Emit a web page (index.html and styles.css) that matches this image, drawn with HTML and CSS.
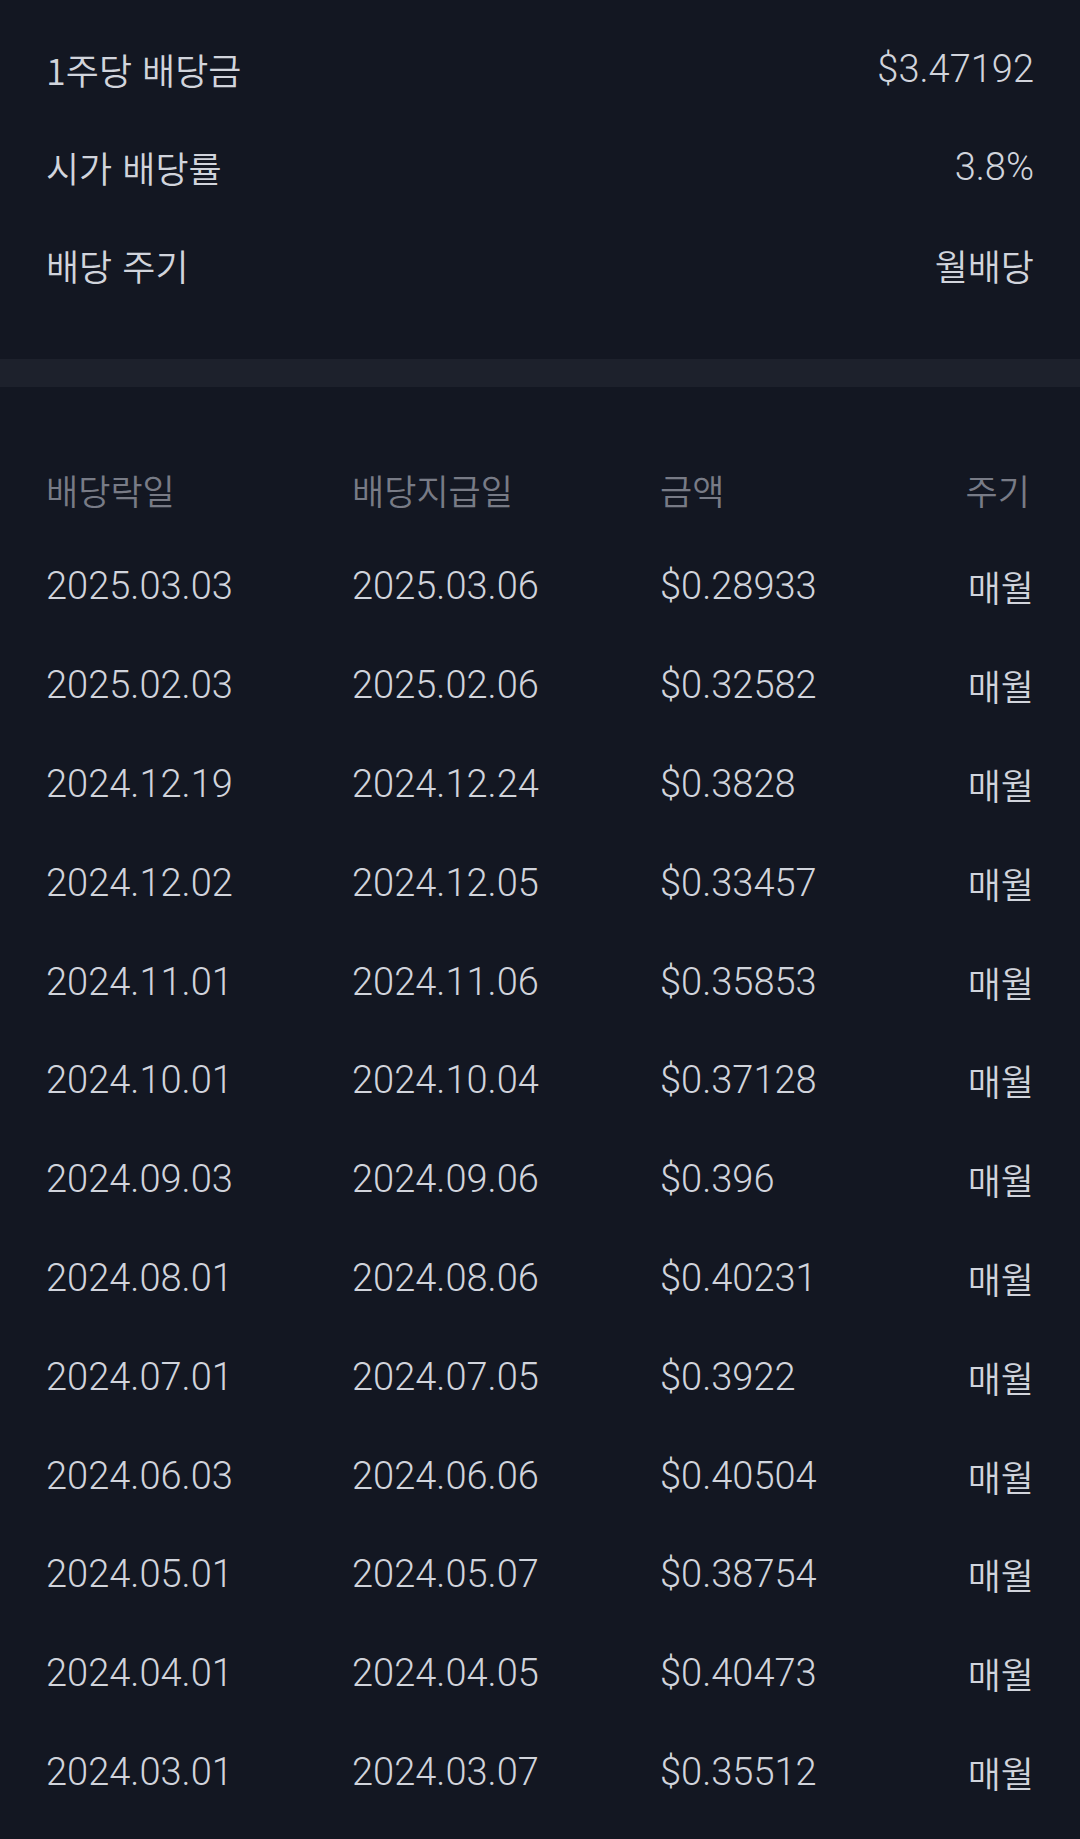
FILE: index.html
```html
<!DOCTYPE html>
<html lang="ko">
<head>
<meta charset="utf-8">
<title>배당 정보</title>
<link rel="stylesheet" href="styles.css">
</head>
<body>
<main class="page">
  <section class="summary">
    <div class="srow"><span class="ko">1주당 배당금</span><span class="num">$3.47192</span></div>
    <div class="srow"><span class="ko">시가 배당률</span><span class="num">3.8%</span></div>
    <div class="srow"><span class="ko">배당 주기</span><span class="ko">월배당</span></div>
  </section>
  <div class="band"></div>
  <section class="history">
    <div class="thead">
      <span class="ko head">배당락일</span>
      <span class="ko head">배당지급일</span>
      <span class="ko head">금액</span>
      <span class="ko head end">주기</span>
    </div>
    <div class="trow"><span class="num">2025.03.03</span><span class="num">2025.03.06</span><span class="num">$0.28933</span><span class="ko end">매월</span></div>
    <div class="trow"><span class="num">2025.02.03</span><span class="num">2025.02.06</span><span class="num">$0.32582</span><span class="ko end">매월</span></div>
    <div class="trow"><span class="num">2024.12.19</span><span class="num">2024.12.24</span><span class="num">$0.3828</span><span class="ko end">매월</span></div>
    <div class="trow"><span class="num">2024.12.02</span><span class="num">2024.12.05</span><span class="num">$0.33457</span><span class="ko end">매월</span></div>
    <div class="trow"><span class="num">2024.11.01</span><span class="num">2024.11.06</span><span class="num">$0.35853</span><span class="ko end">매월</span></div>
    <div class="trow"><span class="num">2024.10.01</span><span class="num">2024.10.04</span><span class="num">$0.37128</span><span class="ko end">매월</span></div>
    <div class="trow"><span class="num">2024.09.03</span><span class="num">2024.09.06</span><span class="num">$0.396</span><span class="ko end">매월</span></div>
    <div class="trow"><span class="num">2024.08.01</span><span class="num">2024.08.06</span><span class="num">$0.40231</span><span class="ko end">매월</span></div>
    <div class="trow"><span class="num">2024.07.01</span><span class="num">2024.07.05</span><span class="num">$0.3922</span><span class="ko end">매월</span></div>
    <div class="trow"><span class="num">2024.06.03</span><span class="num">2024.06.06</span><span class="num">$0.40504</span><span class="ko end">매월</span></div>
    <div class="trow"><span class="num">2024.05.01</span><span class="num">2024.05.07</span><span class="num">$0.38754</span><span class="ko end">매월</span></div>
    <div class="trow"><span class="num">2024.04.01</span><span class="num">2024.04.05</span><span class="num">$0.40473</span><span class="ko end">매월</span></div>
    <div class="trow"><span class="num">2024.03.01</span><span class="num">2024.03.07</span><span class="num">$0.35512</span><span class="ko end">매월</span></div>
  </section>
</main>
</body>
</html>
```
FILE: styles.css
```css
html, body {
  margin: 0;
  padding: 0;
  background: #131722;
}

body {
  font-family: "Noto Sans CJK KR", "Noto Sans", sans-serif;
  color: #d1d4dc;
  width: 1080px;
  height: 1839px;
  overflow: hidden;
}

.page {
  display: flex;
  flex-direction: column;
}

.ko {
  font-family: "Noto Sans CJK KR", sans-serif;
  font-weight: 350;
  font-size: 36px;
  line-height: 1;
  white-space: nowrap;
  color: #d1d4dc;
}

.num {
  font-family: "Roboto", "Noto Sans CJK KR", sans-serif;
  font-weight: 300;
  font-size: 38px;
  line-height: 1;
  white-space: nowrap;
}

.summary {
  padding: 20px 46px 45px;
  display: flex;
  flex-direction: column;
}

.srow {
  height: 98px;
  display: flex;
  justify-content: space-between;
  align-items: center;
}

.band {
  height: 28px;
  background: #1d212c;
}

.history {
  padding: 54px 46px 0;
  display: flex;
  flex-direction: column;
}

.thead,
.trow {
  display: grid;
  grid-template-columns: 306px 308px 1fr auto;
  align-items: center;
}

.thead {
  height: 96px;
}

.trow {
  height: 98.8px;
}

.ko.head {
  color: #787b86;
  font-size: 35px;
}

.head.end {
  padding-right: 4px;
}

.end {
  justify-self: end;
}
```
